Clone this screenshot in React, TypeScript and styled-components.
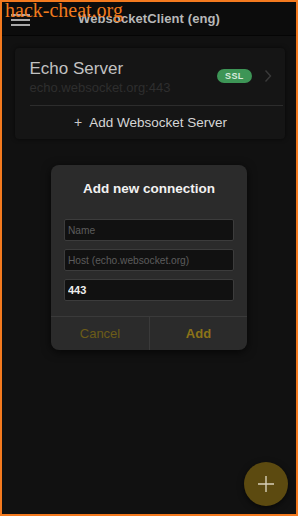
import styled, { createGlobalStyle } from 'styled-components'

const GlobalStyle = createGlobalStyle`
  html, body {
    margin: 0;
    padding: 0;
    background: #111111;
  }
  * { box-sizing: border-box; }
`

export default function App() {
  return (
    <>
      <GlobalStyle />
      <Frame>
        <Watermark>hack-cheat.org</Watermark>
        <Header>
          <MenuButton>
            <span />
            <span />
            <span />
          </MenuButton>
          <HeaderTitle>WebsocketClient (eng)</HeaderTitle>
        </Header>

        <Content>
          <ServerCard>
            <ServerRow>
              <ServerInfo>
                <ServerName>Echo Server</ServerName>
                <ServerHost>echo.websocket.org:443</ServerHost>
              </ServerInfo>
              <Badge>SSL</Badge>
              <Chevron viewBox="0 0 8 14" width="8" height="14">
                <path d="M1.5 1.5 L6.5 7 L1.5 12.5" fill="none" stroke="#3a3a3a" strokeWidth="1.4" />
              </Chevron>
            </ServerRow>
            <AddServer>
              <Plus>+</Plus>Add Websocket Server
            </AddServer>
          </ServerCard>

          <Dialog>
            <DialogTitle>Add new connection</DialogTitle>
            <Fields>
              <Field placeholder="Name" />
              <Field placeholder="Host (echo.websocket.org)" />
              <Field defaultValue="443" $strong />
            </Fields>
            <DialogActions>
              <ActionButton>Cancel</ActionButton>
              <ActionButton $primary>Add</ActionButton>
            </DialogActions>
          </Dialog>
        </Content>

        <Fab>
          <svg viewBox="0 0 20 20" width="20" height="20">
            <path d="M10 2 V18 M2 10 H18" stroke="#d8d0b8" strokeWidth="1.4" />
          </svg>
        </Fab>
      </Frame>
    </>
  )
}

const Frame = styled.div`
  position: relative;
  width: 298px;
  height: 516px;
  border: 2px solid #f47a1f;
  background: #111111;
  font-family: 'Liberation Sans', Arial, sans-serif;
  overflow: hidden;
  display: flex;
  flex-direction: column;
`

const Watermark = styled.div`
  position: absolute;
  left: 3px;
  top: -3px;
  font-family: 'Liberation Serif', 'Times New Roman', serif;
  font-size: 20px;
  color: #f07a1c;
  z-index: 2;
`

const Header = styled.header`
  height: 34px;
  flex-shrink: 0;
  background: #0c0c0c;
  border-bottom: 1px solid #050505;
  display: flex;
  align-items: center;
  position: relative;
  padding-left: 9px;
`

const MenuButton = styled.div`
  width: 19px;
  display: flex;
  flex-direction: column;
  gap: 3px;
  margin-top: 2px;

  span {
    display: block;
    height: 2px;
    background: #a8a8a8;
  }
`

const HeaderTitle = styled.h1`
  flex: 1;
  margin: 0 0 0 -28px;
  text-align: center;
  font-size: 13px;
  font-weight: bold;
  color: #b8b8b8;
  letter-spacing: 0.1px;
`

const Content = styled.main`
  flex: 1;
  display: flex;
  flex-direction: column;
  align-items: center;
  padding: 12px 12px 0 13px;
`

const ServerCard = styled.section`
  width: 270px;
  background: #151515;
  border-radius: 4px;
  box-shadow: 0 0 4px rgba(0, 0, 0, 0.6);
  padding: 0 2px 0 15px;
`

const ServerRow = styled.div`
  display: flex;
  align-items: center;
  padding: 11px 0 9px;
  border-bottom: 1px solid #2c2c2c;
`

const ServerInfo = styled.div`
  flex: 1;
  display: flex;
  flex-direction: column;
`

const ServerName = styled.div`
  font-size: 17px;
  color: #c2c2c2;
  line-height: 20px;
`

const ServerHost = styled.div`
  font-size: 13px;
  color: #2e2e2e;
  line-height: 17px;
`

const Badge = styled.span`
  background: #3d9556;
  color: #d8eadc;
  font-size: 9px;
  font-weight: bold;
  padding: 2px 8px;
  border-radius: 8px;
  margin-top: -4px;
  margin-left: 2px;
  letter-spacing: 0.3px;
`

const Chevron = styled.svg`
  margin: -4px 11px 0 12px;
`

const AddServer = styled.div`
  text-align: center;
  color: #d6d6d6;
  font-size: 13.5px;
  padding: 8px 0 9px;
  margin-right: -2px;
  margin-left: -13px;
`

const Plus = styled.span`
  font-size: 14px;
  color: #c8c8c8;
  margin-right: 7px;
`

const Dialog = styled.section`
  width: 196px;
  margin-top: 26px;
  margin-left: -1px;
  background: #2b2b2b;
  border-radius: 8px;
  box-shadow: 0 2px 10px rgba(0, 0, 0, 0.7);
  overflow: hidden;
`

const DialogTitle = styled.h2`
  margin: 0;
  padding: 15px 0 0;
  text-align: center;
  font-size: 13.5px;
  font-weight: bold;
  color: #f2f2f2;
  line-height: 17px;
`

const Fields = styled.div`
  display: flex;
  flex-direction: column;
  gap: 8px;
  padding: 22px 13px 15px;
`

const Field = styled.input<{ $strong?: boolean }>`
  height: 22px;
  width: 100%;
  background: #111111;
  border: 1px solid #3c3c3c;
  border-radius: 2px;
  padding: 0 3px;
  font-family: 'Liberation Sans', Arial, sans-serif;
  font-size: ${(p) => (p.$strong ? '11px' : '10.2px')};
  font-weight: ${(p) => (p.$strong ? 'bold' : 'normal')};
  color: #eeeeee;
  outline: none;

  &::placeholder {
    color: #5c5c5c;
  }
`

const DialogActions = styled.div`
  display: grid;
  grid-template-columns: 98px 1fr;
  border-top: 1px solid #3a3a3a;
`

const ActionButton = styled.button<{ $primary?: boolean }>`
  height: 33px;
  background: transparent;
  border: none;
  border-left: ${(p) => (p.$primary ? '1px solid #3a3a3a' : 'none')};
  font-family: 'Liberation Sans', Arial, sans-serif;
  font-size: 13px;
  font-weight: ${(p) => (p.$primary ? 'bold' : 'normal')};
  color: ${(p) => (p.$primary ? '#8c7318' : '#6c5c18')};
  padding: 0;
`

const Fab = styled.div`
  position: absolute;
  right: 8px;
  bottom: 8px;
  width: 44px;
  height: 44px;
  border-radius: 50%;
  background: #5c4a10;
  display: flex;
  align-items: center;
  justify-content: center;
  box-shadow: 0 2px 6px rgba(0, 0, 0, 0.6);
`
